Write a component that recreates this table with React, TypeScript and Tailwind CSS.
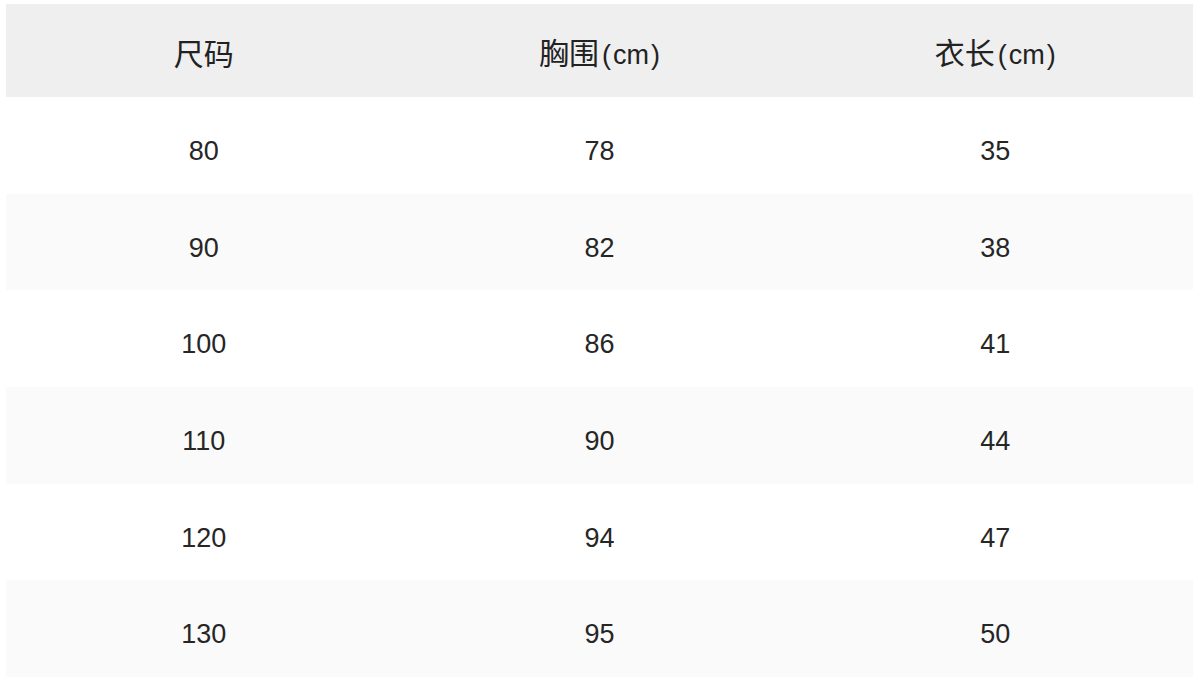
import React from "react";

const rows = [
  ["80", "78", "35"],
  ["90", "82", "38"],
  ["100", "86", "41"],
  ["110", "90", "44"],
  ["120", "94", "47"],
  ["130", "95", "50"],
];

function Unit({ label }: { label: string }) {
  return (
    <div className="text-center">
      {label}
      <span className="ml-[3px] font-['Liberation_Sans'] text-[27px]">(</span>
      <span className="mx-[2px] font-['Liberation_Sans'] text-[27px]">cm</span>
      <span className="font-['Liberation_Sans'] text-[27px]">)</span>
    </div>
  );
}

export default function App() {
  return (
    <div
      className="w-[1199px] h-[677px] bg-white flex flex-col pt-[4px] px-[6px] overflow-hidden text-[#222]"
      style={{ fontFamily: '"Noto Sans CJK SC", "Noto Sans", sans-serif' }}
    >
      {/* header */}
      <div className="h-[93px] shrink-0 grid grid-cols-3 items-center bg-[#efefef] text-[30px] pt-[4px]">
        <div className="text-center">尺码</div>
        <Unit label="胸围" />
        <Unit label="衣长" />
      </div>

      {rows.map((r, i) => (
        <div
          key={r[0]}
          className={`flex-1 grid grid-cols-3 items-center text-[27px] font-['Liberation_Sans'] text-[#262626] pt-[12px] ${
            i % 2 === 1 ? "bg-[#fafafa]" : "bg-white"
          }`}
        >
          {r.map((v, j) => (
            <div key={j} className="text-center">
              {v}
            </div>
          ))}
        </div>
      ))}
    </div>
  );
}
